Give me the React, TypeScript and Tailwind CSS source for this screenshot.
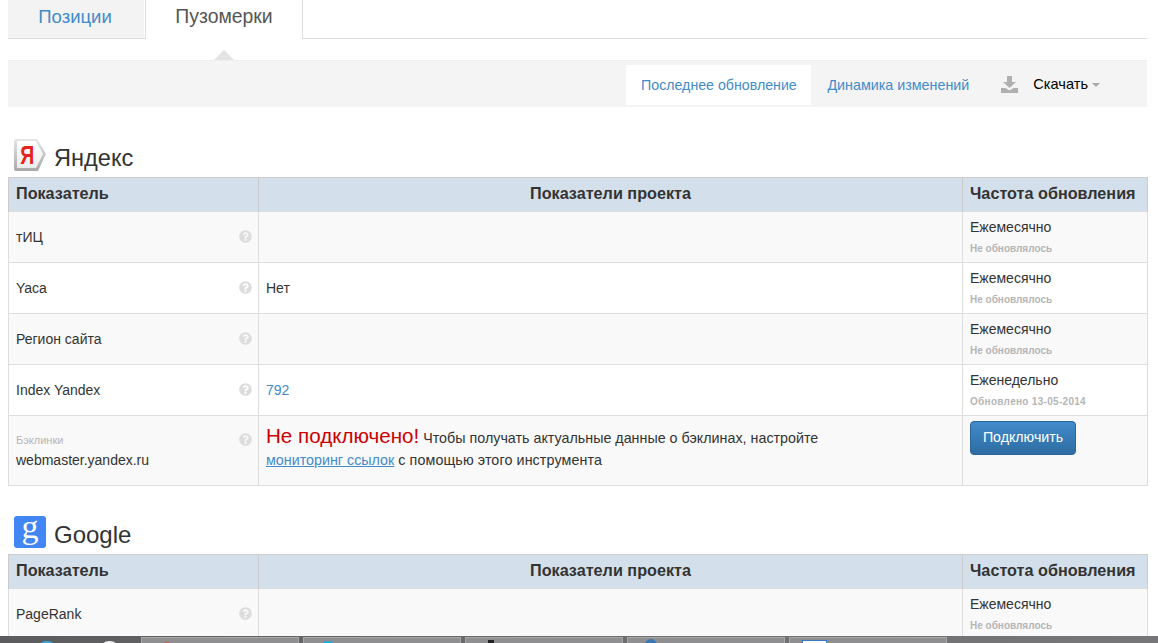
import { FaQuestionCircle } from "react-icons/fa";

const FONT = "font-['Liberation_Sans',Arial,sans-serif]";

/* rows of the two tables */
const YANDEX_ROWS = [
  { name: "тИЦ", value: "", freq: "Ежемесячно", note: "Не обновлялось", alt: true },
  { name: "Yaca", value: "Нет", freq: "Ежемесячно", note: "Не обновлялось", alt: false },
  { name: "Регион сайта", value: "", freq: "Ежемесячно", note: "Не обновлялось", alt: true },
  { name: "Index Yandex", value: "792", freq: "Еженедельно", note: "Обновлено 13-05-2014", alt: false, link: true },
];

const TASK_ICONS = [
  "h-[12px] w-[12px] rounded-full bg-[#e0503a] mt-[4px] ml-[19px]",
  "h-[12px] w-[14px] rounded-full bg-[#22a5e0] mt-[3px] ml-[17px]",
  "h-[8px] w-[6px] bg-[#222222] mt-[2px] ml-[22px]",
  "h-[10px] w-[12px] rounded-t-full bg-[#3a78b5] mt-[1px] ml-[17px]",
  "h-[12px] w-[25px] border border-[#3a78c5] bg-white mt-[2px] ml-[12px]",
];

function HelpIcon() {
  return <FaQuestionCircle className="h-[13px] w-[13px] shrink-0 text-[#dddddd]" />;
}

function Row({
  name,
  value,
  freq,
  note,
  alt,
  link,
}: {
  name: string;
  value: string;
  freq: string;
  note: string;
  alt: boolean;
  link?: boolean;
}) {
  return (
    <tr className={`h-[51px] ${alt ? "bg-[#f9f9f9]" : "bg-white"}`}>
      <td className="border border-[#dddddd] px-[7px] align-middle">
        <div className="flex items-center justify-between text-[#333333]">
          <span>{name}</span>
          <span className="-mt-[1px] -mr-[1px] flex">
            <HelpIcon />
          </span>
        </div>
      </td>
      <td className={`border border-[#dddddd] px-[7px] align-middle ${link ? "text-[#428bca]" : "text-[#333333]"}`}>
        {value}
      </td>
      <td className="border border-[#dddddd] px-[7px] align-top pt-[5px]">
        <div className="leading-[20px] text-[#333333]">{freq}</div>
        <div className={`mt-[2px] text-[10px] leading-[20px] font-bold text-[#b5b5b5] ${link ? "tracking-[0.3px]" : ""}`}>
          {note}
        </div>
      </td>
    </tr>
  );
}

function TableHead() {
  return (
    <thead>
      <tr className="h-[34px] bg-[#d3e0eb] text-[16.2px] font-bold text-[#333333]">
        <th className="border border-[#cccccc] border-b-0 px-[7px] pb-[2px] text-left font-bold">Показатель</th>
        <th className="border border-[#cccccc] border-b-0 px-[7px] pb-[2px] text-center font-bold">Показатели проекта</th>
        <th className="border border-[#cccccc] border-b-0 px-[7px] pb-[2px] text-left font-bold whitespace-nowrap">
          Частота обновления
        </th>
      </tr>
    </thead>
  );
}

function Cols() {
  return (
    <colgroup>
      <col className="w-[250px]" />
      <col className="w-[704px]" />
      <col className="w-[185px]" />
    </colgroup>
  );
}

function YandexLogo() {
  return (
    <span className="relative flex h-[32px] w-[32px] shrink-0 items-center justify-center">
      <svg viewBox="0 0 32 32" className="absolute inset-0 h-full w-full">
        <defs>
          <linearGradient id="ya" x1="0" y1="0" x2="0" y2="1">
            <stop offset="0" stopColor="#e6e6e6" />
            <stop offset="1" stopColor="#a8a8a8" />
          </linearGradient>
          <linearGradient id="yb" x1="0" y1="0" x2="0" y2="1">
            <stop offset="0" stopColor="#ffffff" />
            <stop offset="1" stopColor="#ececec" />
          </linearGradient>
        </defs>
        <path d="M2 0H23L32 15L24 32H2Q0 32 0 30V2Q0 0 2 0Z" fill="url(#ya)" />
        <path d="M3 2H22L29 15L22 29H3Z" fill="url(#yb)" />
      </svg>
      <span className="relative -ml-[5px] scale-x-75 text-[26px] leading-none font-bold text-[#e6231c]">Я</span>
    </span>
  );
}

function GoogleLogo() {
  return (
    <span className="flex h-[32px] w-[32px] shrink-0 items-center justify-center rounded-[3px] bg-[#4285f4]">
      <span className="-mt-[11px] font-['Liberation_Serif',serif] text-[34px] leading-none text-white">g</span>
    </span>
  );
}

function Heading({ logo, title, size }: { logo: React.ReactNode; title: string; size: string }) {
  return (
    <div className="flex h-[32px] items-center gap-[8px] pl-[6px]">
      {logo}
      <h3 className={`leading-none text-[#333333] ${size}`}>{title}</h3>
    </div>
  );
}

export default function App() {
  return (
    <div className={`${FONT} flex h-[643px] w-[1158px] flex-col overflow-hidden bg-white text-[14px]`}>
      <div className="min-h-0 flex-1 overflow-hidden pr-[11px] pl-[8px]">
        {/* tabs */}
        <div className="flex h-[39px] border-b border-[#dddddd]">
          <div className="flex w-[136px] items-center justify-center bg-[#f3f3f3] pr-[2px] pb-[5px] text-[18.5px] text-[#428bca]">
            Позиции
          </div>
          <div className="relative -mb-px ml-px flex h-[39px] w-[158px] items-center justify-center border-x border-[#dddddd] bg-white pb-[5px] text-[19.4px] text-[#555555]">
            Пузомерки
            <span className="absolute top-[50px] left-[68px] h-0 w-0 border-x-[10px] border-b-[10px] border-x-transparent border-b-[#e4e4e4]" />
          </div>
        </div>

        {/* toolbar */}
        <div className="mt-[21px] flex h-[47px] items-start justify-end border-t border-[#eeeeee] bg-[#f4f4f4] pt-[4px] pr-[47px] text-[14.2px]">
          <div className="flex h-[40px] w-[185px] items-center justify-center bg-white pt-[2px] text-[#428bca]">
            Последнее обновление
          </div>
          <div className="ml-[16px] flex h-[40px] items-center pt-[2px] text-[14.3px] text-[#428bca]">Динамика изменений</div>
          <div className="ml-[32px] flex h-[38px] items-center text-black">
            <svg viewBox="0 0 17 17" className="h-[17px] w-[17px] text-[#b0b0b0]" fill="currentColor">
              <path d="M6 0H11V6H15L8.5 12L2 6H6Z" />
              <path d="M0 12H4.5L8.5 14.5L12.5 12H17V17H0Z" />
            </svg>
            <span className="mt-[2px] ml-[15px] text-[14.6px]">Скачать</span>
            <span className="mt-[1px] ml-[4px] h-0 w-0 border-x-[4px] border-t-[4px] border-x-transparent border-t-[#aaaaaa]" />
          </div>
        </div>

        {/* Яндекс */}
        <div className="mt-[32px]">
          <Heading logo={<YandexLogo />} title="Яндекс" size="pt-[7px] text-[23.6px]" />
          <table className="mt-[6px] w-[1139px] table-fixed border-collapse">
            <Cols />
            <TableHead />
            <tbody>
              {YANDEX_ROWS.map((row) => (
                <Row key={row.name} {...row} />
              ))}
              <tr className="h-[70px] bg-[#f9f9f9]">
                <td className="border border-[#dddddd] px-[7px] align-middle">
                  <div className="flex items-start justify-between">
                    <div className="-mt-[1px]">
                      <div className="text-[11px] leading-[20px] text-[#b5b5b5]">Бэклинки</div>
                      <div className="leading-[20px] text-[#333333]">webmaster.yandex.ru</div>
                    </div>
                    <span className="mt-[2px] -mr-[1px] flex">
                      <HelpIcon />
                    </span>
                  </div>
                </td>
                <td className="border border-[#dddddd] px-[7px] align-top pt-[6px] text-[14.3px] text-[#333333]">
                  <div className="flex items-baseline leading-[27px]">
                    <span className="text-[20.6px] text-[#cc0000]">Не подключено!</span>
                    <span className="ml-[4px]">Чтобы получать актуальные данные о бэклинах, настройте</span>
                  </div>
                  <div className="-mt-px leading-[18px]">
                    <span className="text-[#428bca] underline">мониторинг ссылок</span>{" "}
                    <span className="tracking-[0.1px]">с помощью этого инструмента</span>
                  </div>
                </td>
                <td className="border border-[#dddddd] px-[7px] align-top pt-[5px]">
                  <button className="h-[34px] w-[106px] rounded-[4px] border border-[#2b669a] bg-gradient-to-b from-[#428bca] to-[#2d6ca2] text-[14.2px] text-white">
                    Подключить
                  </button>
                </td>
              </tr>
            </tbody>
          </table>
        </div>

        {/* Google */}
        <div className="mt-[30px]">
          <Heading logo={<GoogleLogo />} title="Google" size="pt-[5px] text-[24px]" />
          <table className="mt-[6px] w-[1139px] table-fixed border-collapse">
            <Cols />
            <TableHead />
            <tbody>
              <Row name="PageRank" value="" freq="Ежемесячно" note="Не обновлялось" alt />
            </tbody>
          </table>
        </div>
      </div>

      {/* taskbar */}
      <div className="flex h-[7px] shrink-0 items-start overflow-hidden bg-gradient-to-r from-[#5c5c5e] via-[#6c6c6e] to-[#77777a]">
        <span className="mt-[5px] ml-[38px] h-[16px] w-[18px] shrink-0 rounded-full bg-[#35a6dc]" />
        <span className="mt-[5px] ml-[44px] h-[18px] w-[19px] shrink-0 rounded-full bg-[#f2f2f2]" />
        <div className="mt-px ml-[22px] flex gap-[4px]">
          {TASK_ICONS.map((icon) => (
            <div key={icon} className="h-[9px] w-[158px] border border-[#a8a8a8] bg-[#8f8f91]">
              <div className={icon} />
            </div>
          ))}
        </div>
      </div>
    </div>
  );
}
